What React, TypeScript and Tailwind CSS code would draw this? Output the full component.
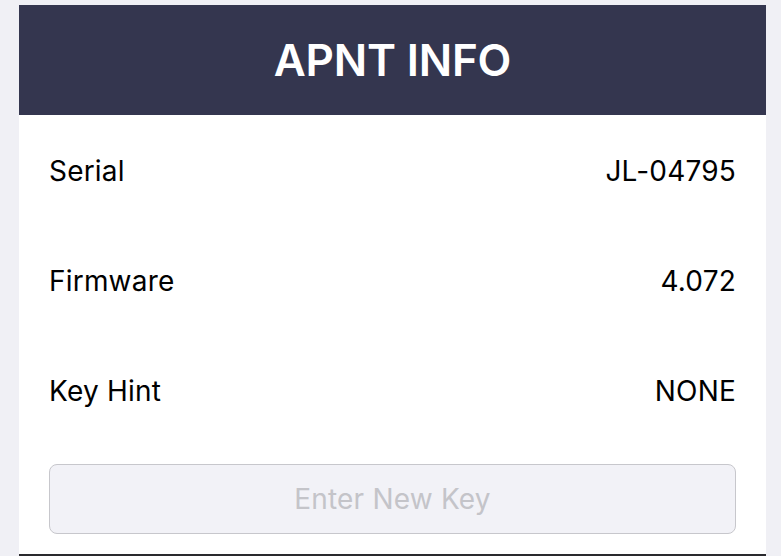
export default function App() {
  const rows = [
    { label: "Serial", value: "JL-04795" },
    { label: "Firmware", value: "4.072" },
    { label: "Key Hint", value: "NONE" },
  ];

  return (
    <div
      className="h-[556px] w-[781px] overflow-hidden bg-[#f0f0f5] pt-[5px] pl-[19px] pr-[15px]"
      style={{ fontFamily: "Inter, 'Noto Sans', sans-serif" }}
    >
      <div className="flex h-[551px] flex-col bg-white">
        <header className="flex h-[110px] shrink-0 items-center justify-center bg-[#34364f]">
          <h1 className="text-[44px] font-semibold tracking-[-0.2px] text-white">APNT INFO</h1>
        </header>

        <div className="flex flex-col px-[30px]">
          {rows.map((r) => (
            <div
              key={r.label}
              className="flex h-[110px] items-center justify-between pt-[2px] text-[28px] tracking-[0.2px] text-black"
            >
              <span>{r.label}</span>
              <span>{r.value}</span>
            </div>
          ))}
        </div>

        <div className="px-[30px] pt-[19px]">
          <input
            type="text"
            placeholder="Enter New Key"
            className="h-[70px] w-full rounded-[8px] border border-[#c7c7cc] bg-[#f2f2f7] text-center text-[28px] tracking-[0.2px] text-black outline-none placeholder:text-[#c4c4c9]"
          />
        </div>

        <div className="mt-auto h-[2px] bg-[#2a2a2e]" />
      </div>
    </div>
  );
}
